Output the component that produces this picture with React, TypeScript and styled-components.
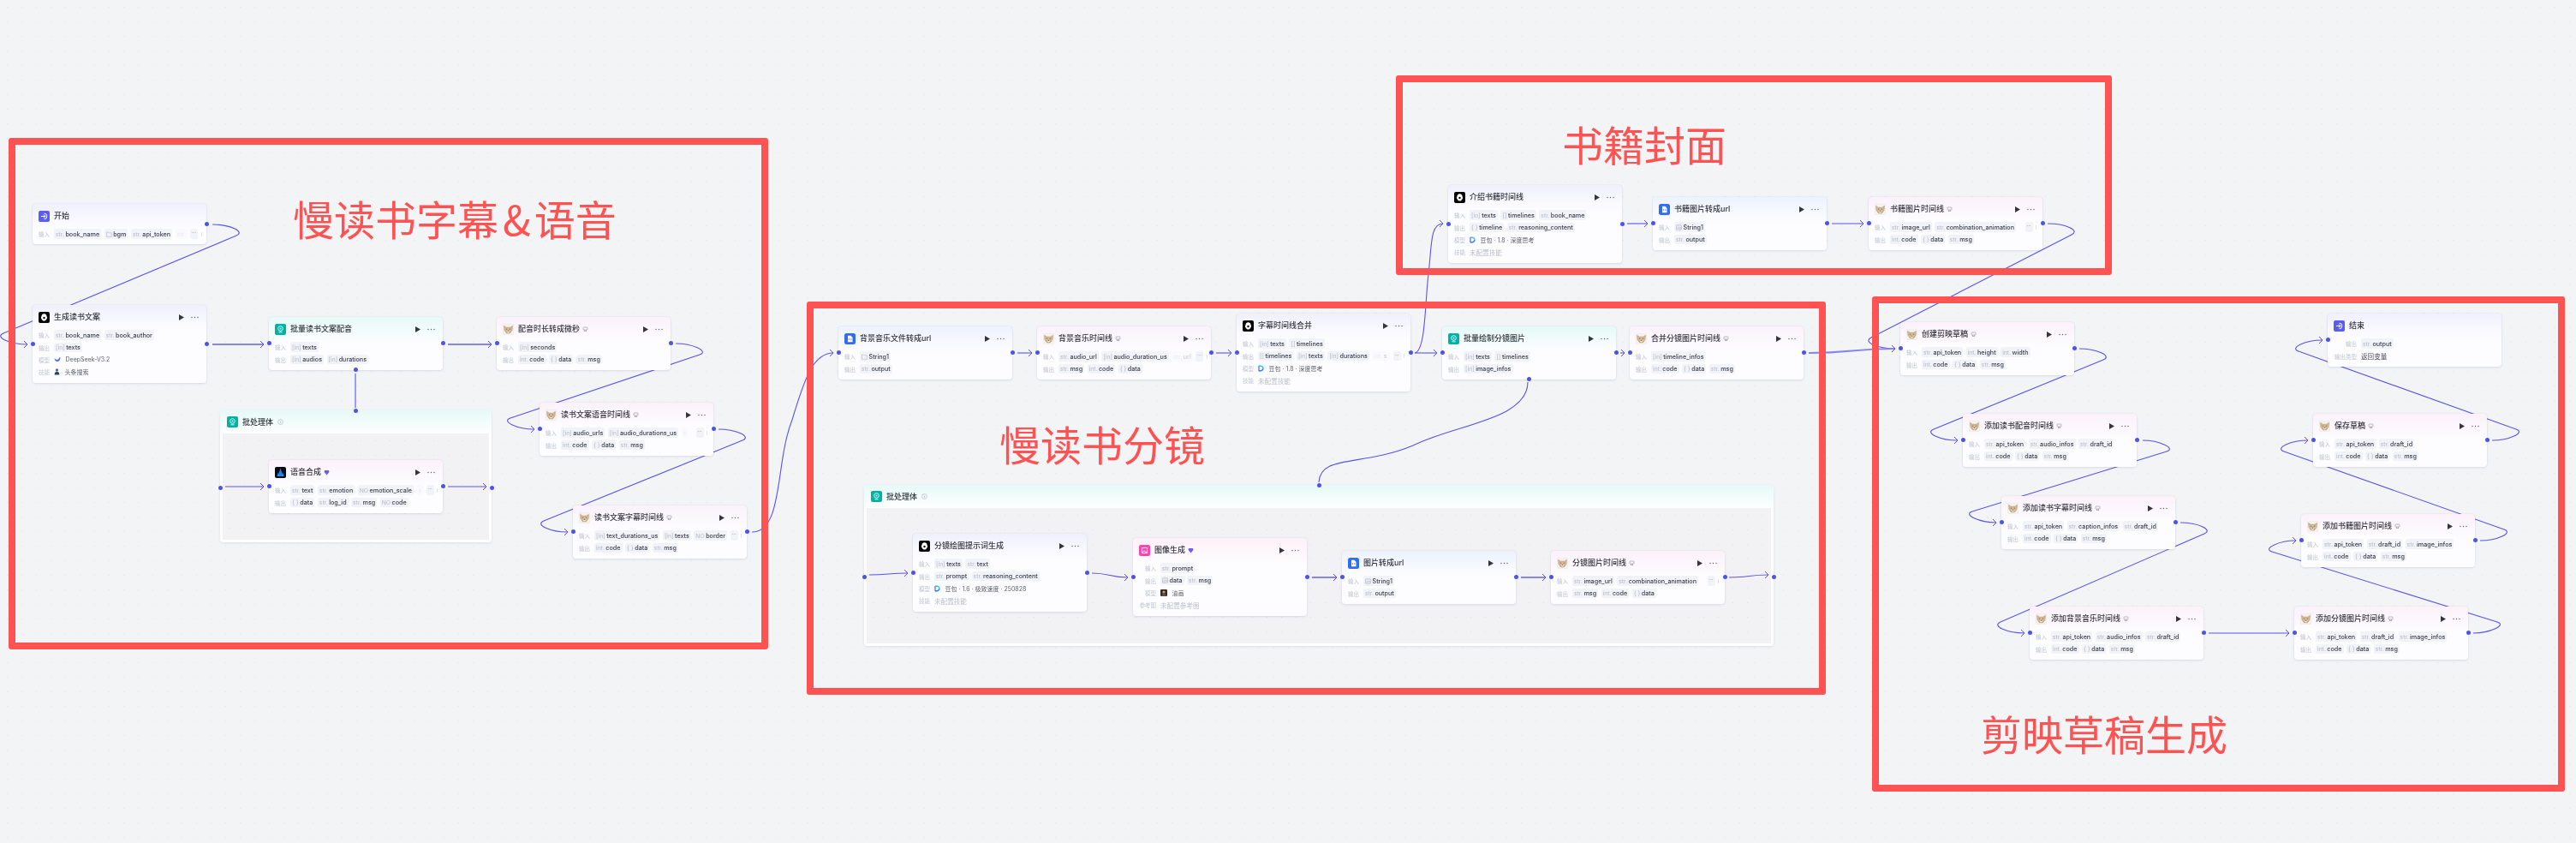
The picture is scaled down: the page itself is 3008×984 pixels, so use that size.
import styled, { createGlobalStyle } from "styled-components";

type Kind = "start" | "llm" | "batch" | "code" | "plugin" | "tts" | "image";
type Mark = "plug" | "gem" | "info";

interface RowType {
  label: string;
  tags?: string[];
  more?: string;
  model?: "doubao" | "whale" | "news" | "paint";
  text?: string;
  empty?: string;
  plain?: string;
}

interface NodeType {
  title: string;
  kind: Kind;
  x: number;
  y: number;
  rows: RowType[];
  labelWidth?: number;
  noActions?: boolean;
  noLeft?: boolean;
  noRight?: boolean;
  bottomDot?: boolean;
}

const tints: Record<Kind, string> = {
  start: "#f0f0ff",
  llm: "#f0f0fe",
  batch: "#e5faf7",
  code: "#ecf2ff",
  plugin: "#fbf1fc",
  tts: "#fbf1fc",
  image: "#fef0f7",
};

const marks: Partial<Record<Kind, Mark>> = {
  plugin: "plug",
  tts: "gem",
  image: "gem",
};

const nodes: NodeType[] = [
  {
    title: "开始",
    kind: "start",
    x: 38,
    y: 238,
    noActions: true,
    noLeft: true,
    rows: [{ label: "输入", tags: ["str. book_name", "file bgm", "str. api_token"], more: "str." }],
  },
  {
    title: "生成读书文案",
    kind: "llm",
    x: 38,
    y: 356,
    rows: [
      { label: "输入", tags: ["str. book_name", "str. book_author"] },
      { label: "输出", tags: ["[in] texts"] },
      { label: "模型", model: "whale", text: "DeepSeek-V3.2" },
      { label: "技能", model: "news", text: "头条搜索" },
    ],
  },
  {
    title: "批量读书文案配音",
    kind: "batch",
    x: 314,
    y: 370,
    bottomDot: true,
    rows: [
      { label: "输入", tags: ["[in] texts"] },
      { label: "输出", tags: ["[in] audios", "[in] durations"] },
    ],
  },
  {
    title: "配音时长转成微秒",
    kind: "plugin",
    x: 580,
    y: 370,
    rows: [
      { label: "输入", tags: ["[in] seconds"] },
      { label: "输出", tags: ["int. code", "{} data", "str. msg"] },
    ],
  },
  {
    title: "语音合成",
    kind: "tts",
    x: 314,
    y: 537,
    rows: [
      { label: "输入", tags: ["str. text", "str. emotion", "NO emotion_scale"], more: "s" },
      { label: "输出", tags: ["{} data", "str. log_id", "str. msg", "NO code"] },
    ],
  },
  {
    title: "读书文案语音时间线",
    kind: "plugin",
    x: 630,
    y: 470,
    rows: [
      { label: "输入", tags: ["[in] audio_urls", "[in] audio_durations_us"], more: "s" },
      { label: "输出", tags: ["int. code", "{} data", "str. msg"] },
    ],
  },
  {
    title: "读书文案字幕时间线",
    kind: "plugin",
    x: 669,
    y: 590,
    rows: [
      { label: "输入", tags: ["[in] text_durations_us", "[in] texts", "NO border"], more: "" },
      { label: "输出", tags: ["int. code", "{} data", "str. msg"] },
    ],
  },
  {
    title: "背景音乐文件转成url",
    kind: "code",
    x: 979,
    y: 381,
    rows: [
      { label: "输入", tags: ["file String1"] },
      { label: "输出", tags: ["str. output"] },
    ],
  },
  {
    title: "背景音乐时间线",
    kind: "plugin",
    x: 1211,
    y: 381,
    rows: [
      { label: "输入", tags: ["str. audio_url", "[in] audio_duration_us"], more: "str. url" },
      { label: "输出", tags: ["str. msg", "int. code", "{} data"] },
    ],
  },
  {
    title: "字幕时间线合并",
    kind: "llm",
    x: 1444,
    y: 366,
    rows: [
      { label: "输入", tags: ["[in] texts", "[] timelines"] },
      { label: "输出", tags: ["[] timelines", "[in] texts", "[in] durations"], more: "int. s" },
      { label: "模型", model: "doubao", text: "豆包 · 1.8 · 深度思考" },
      { label: "技能", empty: "未配置技能" },
    ],
  },
  {
    title: "批量绘制分镜图片",
    kind: "batch",
    x: 1684,
    y: 381,
    bottomDot: true,
    rows: [
      { label: "输入", tags: ["[in] texts", "[] timelines"] },
      { label: "输出", tags: ["[in] image_infos"] },
    ],
  },
  {
    title: "合并分镜图片时间线",
    kind: "plugin",
    x: 1903,
    y: 381,
    rows: [
      { label: "输入", tags: ["[in] timeline_infos"] },
      { label: "输出", tags: ["int. code", "{} data", "str. msg"] },
    ],
  },
  {
    title: "分镜绘图提示词生成",
    kind: "llm",
    x: 1066,
    y: 623,
    rows: [
      { label: "输入", tags: ["[in] texts", "str. text"] },
      { label: "输出", tags: ["str. prompt", "str. reasoning_content"] },
      { label: "模型", model: "doubao", text: "豆包 · 1.6 · 极致速度 · 250828" },
      { label: "技能", empty: "未配置技能" },
    ],
  },
  {
    title: "图像生成",
    kind: "image",
    x: 1323,
    y: 628,
    labelWidth: 20,
    rows: [
      { label: "输入", tags: ["str. prompt"] },
      { label: "输出", tags: ["img data", "str. msg"] },
      { label: "模型", model: "paint", text: "油画" },
      { label: "参考图", empty: "未配置参考图" },
    ],
  },
  {
    title: "图片转成url",
    kind: "code",
    x: 1567,
    y: 643,
    rows: [
      { label: "输入", tags: ["img String1"] },
      { label: "输出", tags: ["str. output"] },
    ],
  },
  {
    title: "分镜图片时间线",
    kind: "plugin",
    x: 1811,
    y: 643,
    rows: [
      { label: "输入", tags: ["str. image_url", "str. combination_animation"], more: "" },
      { label: "输出", tags: ["str. msg", "int. code", "{} data"] },
    ],
  },
  {
    title: "介绍书籍时间线",
    kind: "llm",
    x: 1691,
    y: 216,
    rows: [
      { label: "输入", tags: ["[in] texts", "[] timelines", "str. book_name"] },
      { label: "输出", tags: ["{} timeline", "str. reasoning_content"] },
      { label: "模型", model: "doubao", text: "豆包 · 1.8 · 深度思考" },
      { label: "技能", empty: "未配置技能" },
    ],
  },
  {
    title: "书籍图片转成url",
    kind: "code",
    x: 1930,
    y: 230,
    rows: [
      { label: "输入", tags: ["img String1"] },
      { label: "输出", tags: ["str. output"] },
    ],
  },
  {
    title: "书籍图片时间线",
    kind: "plugin",
    x: 2182,
    y: 230,
    rows: [
      { label: "输入", tags: ["str. image_url", "str. combination_animation"], more: "" },
      { label: "输出", tags: ["int. code", "{} data", "str. msg"] },
    ],
  },
  {
    title: "创建剪映草稿",
    kind: "plugin",
    x: 2219,
    y: 376,
    rows: [
      { label: "输入", tags: ["str. api_token", "int. height", "int. width"] },
      { label: "输出", tags: ["int. code", "{} data", "str. msg"] },
    ],
  },
  {
    title: "添加读书配音时间线",
    kind: "plugin",
    x: 2292,
    y: 483,
    rows: [
      { label: "输入", tags: ["str. api_token", "str. audio_infos", "str. draft_id"] },
      { label: "输出", tags: ["int. code", "{} data", "str. msg"] },
    ],
  },
  {
    title: "添加读书字幕时间线",
    kind: "plugin",
    x: 2337,
    y: 579,
    rows: [
      { label: "输入", tags: ["str. api_token", "str. caption_infos", "str. draft_id"] },
      { label: "输出", tags: ["int. code", "{} data", "str. msg"] },
    ],
  },
  {
    title: "添加背景音乐时间线",
    kind: "plugin",
    x: 2370,
    y: 708,
    rows: [
      { label: "输入", tags: ["str. api_token", "str. audio_infos", "str. draft_id"] },
      { label: "输出", tags: ["int. code", "{} data", "str. msg"] },
    ],
  },
  {
    title: "添加分镜图片时间线",
    kind: "plugin",
    x: 2679,
    y: 708,
    rows: [
      { label: "输入", tags: ["str. api_token", "str. draft_id", "str. image_infos"] },
      { label: "输出", tags: ["int. code", "{} data", "str. msg"] },
    ],
  },
  {
    title: "添加书籍图片时间线",
    kind: "plugin",
    x: 2687,
    y: 600,
    rows: [
      { label: "输入", tags: ["str. api_token", "str. draft_id", "str. image_infos"] },
      { label: "输出", tags: ["int. code", "{} data", "str. msg"] },
    ],
  },
  {
    title: "保存草稿",
    kind: "plugin",
    x: 2701,
    y: 483,
    rows: [
      { label: "输入", tags: ["str. api_token", "str. draft_id"] },
      { label: "输出", tags: ["int. code", "{} data", "str. msg"] },
    ],
  },
  {
    title: "结束",
    kind: "start",
    x: 2718,
    y: 366,
    noActions: true,
    noRight: true,
    labelWidth: 27,
    rows: [
      { label: "输出", tags: ["str. output"] },
      { label: "输出类型", plain: "返回变量" },
    ],
  },
];

const batches = [
  { x: 257, y: 479, w: 317, h: 154 },
  { x: 1009, y: 566, w: 1062, h: 188 },
];

const frames = [
  { before: "慢读书字幕", after: "语音", x: 10, y: 161, w: 887, h: 597, px: 324, py: 60 },
  { before: "慢读书分镜", x: 942, y: 352, w: 1190, h: 459, px: 217, py: 132 },
  { before: "书籍封面", x: 1630, y: 88, w: 836, h: 233, px: 186, py: 46 },
  { before: "剪映草稿生成", x: 2186, y: 346, w: 809, h: 578, px: 119, py: 476 },
];

// straight-ish hop between two handles
const hop = (sx: number, sy: number, tx: number, ty: number) => {
  const x0 = sx + 6;
  const x1 = tx - 6;
  const mid = (x0 + x1) / 2;
  return `M${x0} ${sy} C${mid} ${sy} ${mid} ${ty} ${x1} ${ty}`;
};

// backwards edge: bulges right of the source, runs diagonally, bulges left of the target
const loop = (sx: number, sy: number, tx: number, ty: number, bulge = 32) => {
  const x0 = sx + 6;
  const x1 = tx - 6;
  const dir = ty > sy ? 1 : -1;
  const ax = x0 + bulge - 4;
  const ay = sy + dir * 13;
  const bx = x1 - bulge + 4;
  const by = ty - dir * 13;
  const len = Math.hypot(bx - ax, by - ay);
  const ux = ((bx - ax) / len) * 12;
  const uy = ((by - ay) / len) * 12;
  return [
    `M${x0} ${sy}`,
    `C${x0 + 20} ${sy} ${ax - ux} ${ay - uy} ${ax} ${ay}`,
    `L${bx} ${by}`,
    `C${bx + ux} ${by + uy} ${x1 - 20} ${ty} ${x1} ${ty}`,
  ].join(" ");
};

const thinEdges = [
  loop(242, 262, 38, 402),
  loop(783, 401, 630, 501),
  loop(833, 501, 669, 621),
  "M878 621 C915 621 905 540 925 490 C940 440 950 412 973 412",
  hop(257, 568, 314, 568),
  hop(517, 568, 574, 568),
  hop(1182, 412, 1211, 412),
  hop(1414, 412, 1444, 412),
  hop(1646, 412, 1684, 412),
  hop(1886, 412, 1903, 412),
  "M1652 412 C1665 410 1664 350 1668 320 C1672 285 1670 261 1685 261",
  hop(1894, 261, 1930, 261),
  hop(2133, 261, 2182, 261),
  loop(2385, 261, 2219, 407),
  hop(1009, 671, 1066, 669),
  hop(1269, 669, 1323, 674),
  hop(2013, 674, 2071, 671),
  loop(2422, 407, 2292, 514),
  loop(2496, 514, 2337, 610),
  loop(2540, 610, 2370, 739),
  hop(2573, 739, 2679, 739),
  loop(2882, 739, 2687, 631),
  loop(2890, 631, 2701, 514),
  loop(2904, 514, 2718, 397),
];

const thickEdges = [
  hop(242, 402, 314, 402),
  hop(517, 402, 580, 402),
  hop(1526, 674, 1567, 674),
  hop(1770, 674, 1811, 674),
  hop(2106, 412, 2219, 407),
];

// batch links end on the container's top handle, without an arrow
const batchEdges = [
  "M415 436 L415 476",
  "M1784 446 C1784 490 1700 495 1650 520 C1590 545 1542 530 1540 563",
];

const GlobalStyle = createGlobalStyle`
  html,
  body {
    margin: 0;
    padding: 0;
    background: #f3f4f6;
  }

  body {
    width: 3008px;
    height: 984px;
    overflow: hidden;
    font-family: Inter, "Noto Sans CJK SC", sans-serif;
  }
`;

const Canvas = styled.div`
  position: relative;
  width: 3008px;
  height: 984px;
  overflow: hidden;
  background-color: #f3f4f6;
  background-image: radial-gradient(#e2e4e9 0.7px, transparent 0.8px);
  background-size: 17px 17px;
  filter: blur(0.45px);
`;

const EdgeLayer = styled.svg`
  position: absolute;
  left: 0;
  top: 0;
`;

const Batch = styled.div<{ $x: number; $y: number; $w: number; $h: number }>`
  position: absolute;
  left: ${(p) => p.$x}px;
  top: ${(p) => p.$y}px;
  width: ${(p) => p.$w}px;
  height: ${(p) => p.$h}px;
  box-sizing: border-box;
  display: flex;
  flex-direction: column;
  padding: 0 3px 3px;
  border-radius: 4px;
  background: linear-gradient(180deg, ${tints.batch} 0, #ffffff 28px);
  box-shadow: 0 1px 3px rgba(40, 40, 90, 0.1);
`;

const BatchHead = styled.div`
  display: flex;
  align-items: center;
  gap: 5px;
  height: 27px;
  flex: none;
  padding-left: 5px;
  font-size: 9px;
  font-weight: 500;
  color: #34353f;
`;

const BatchBody = styled.div`
  flex: 1;
  background-color: #f2f2f4;
  background-image: radial-gradient(#dfe0e5 0.7px, transparent 0.8px);
  background-size: 17px 17px;
`;

const Card = styled.div<{ $x: number; $y: number; $tint: string }>`
  position: absolute;
  left: ${(p) => p.$x}px;
  top: ${(p) => p.$y}px;
  width: 203px;
  box-sizing: border-box;
  padding-bottom: 5px;
  border-radius: 4px;
  background: linear-gradient(180deg, ${(p) => p.$tint} 0, #fdfdff 30px);
  box-shadow: 0 0 1px rgba(40, 40, 90, 0.18), 0 1px 3px rgba(40, 40, 90, 0.1);
`;

const Head = styled.div`
  display: flex;
  align-items: center;
  height: 28px;
  padding: 0 9px 0 7px;
  box-sizing: border-box;
`;

const Title = styled.span`
  margin-left: 5px;
  font-size: 9px;
  font-weight: 500;
  line-height: 12px;
  color: #34353f;
  white-space: nowrap;
`;

const MarkSlot = styled.span`
  display: flex;
  margin-left: 3px;
`;

const Actions = styled.div`
  display: flex;
  align-items: center;
  gap: 8px;
  margin-left: auto;
`;

const Row = styled.div`
  display: flex;
  align-items: center;
  gap: 5px;
  height: 14.4px;
  padding: 0 7px;
`;

const RowLabel = styled.span<{ $w: number }>`
  flex: none;
  width: ${(p) => p.$w}px;
  text-align: right;
  font-size: 6.5px;
  color: #c3c6d1;
  white-space: nowrap;
`;

const Tags = styled.div`
  display: flex;
  align-items: center;
  gap: 3.5px;
  flex: 1;
  min-width: 0;
`;

const Tag = styled.span<{ $faded?: boolean }>`
  display: inline-flex;
  align-items: center;
  gap: 1.5px;
  flex: none;
  height: 11.5px;
  padding: 0 2px;
  border-radius: 2.5px;
  background: #f2f3f8;
  font-size: 7.2px;
  font-weight: 500;
  color: #41434f;
  white-space: nowrap;
  opacity: ${(p) => (p.$faded ? 0.25 : 1)};
`;

const Prefix = styled.span`
  font-size: 6.8px;
  font-weight: 400;
  color: #b5b8c6;
`;

const Chip = styled.span`
  flex: none;
  margin-left: auto;
  width: 9px;
  height: 11.5px;
  border-radius: 2.5px;
  background: #f2f3f8;
  font-size: 6px;
  line-height: 9px;
  text-align: center;
  color: #8d8f9c;
`;

const Sliver = styled.span`
  flex: none;
  width: 1px;
  height: 5px;
  background: #e3e4ea;
`;

const ModelText = styled.span`
  margin-left: 2px;
  font-size: 7px;
  color: #5d5f6c;
  white-space: nowrap;
`;

const Empty = styled.span`
  font-size: 7.6px;
  color: #bcbec9;
  white-space: nowrap;
`;

const Plain = styled.span`
  font-size: 7.6px;
  color: #484a56;
  white-space: nowrap;
`;

const Dot = styled.i<{ $side: "left" | "right" | "top" | "bottom" }>`
  position: absolute;
  width: 5px;
  height: 5px;
  border-radius: 50%;
  background: #4d53e8;
  ${(p) => (p.$side === "left" ? "left: -2.5px; top: calc(50% - 2.5px);" : "")}
  ${(p) => (p.$side === "right" ? "right: -2.5px; top: calc(50% - 2.5px);" : "")}
  ${(p) => (p.$side === "top" ? "top: -2.5px; left: calc(50% - 2.5px);" : "")}
  ${(p) => (p.$side === "bottom" ? "bottom: -2.5px; left: calc(50% - 2.5px);" : "")}
`;

const BatchDot = styled(Dot)<{ $y: number }>`
  top: ${(p) => p.$y}px;
`;

const Frame = styled.div<{ $x: number; $y: number; $w: number; $h: number; $px: number; $py: number }>`
  position: absolute;
  left: ${(p) => p.$x}px;
  top: ${(p) => p.$y}px;
  width: ${(p) => p.$w}px;
  height: ${(p) => p.$h}px;
  box-sizing: border-box;
  padding: ${(p) => p.$py}px 0 0 ${(p) => p.$px}px;
  border: 8px solid #ff5252;
  border-radius: 3px;
  pointer-events: none;
`;

const FrameLabel = styled.div`
  font-family: "Noto Sans CJK SC", sans-serif;
  font-size: 48px;
  line-height: 50px;
  color: #ff5252;
  white-space: nowrap;
`;

const Amp = styled.span`
  margin: 0 4px 0 5px;
`;

const KindIcon = ({ kind }: { kind: Kind }) => {
  if (kind === "start") {
    return (
      <svg width="13" height="13" viewBox="0 0 13 13">
        <rect width="13" height="13" rx="2" fill="#5a5cf6" />
        <path d="M3 6.5h5M6 4.5l2 2-2 2" fill="none" stroke="#fff" />
        <path d="M6.5 3.2a3.3 3.3 0 1 1 0 6.6" fill="none" stroke="#fff" />
      </svg>
    );
  }
  if (kind === "llm") {
    return (
      <svg width="13" height="13" viewBox="0 0 13 13">
        <rect width="13" height="13" rx="2" fill="#050505" />
        <path d="M6.5 2.2c2 0 3 1.4 3 3 .8.8.8 2.2 0 3-.7 1.4-1.8 2.4-3 2.4s-2.3-1-3-2.4c-.8-.8-.8-2.2 0-3 0-1.6 1-3 3-3z" fill="#fff" />
        <circle cx="6.5" cy="7" r="1.2" fill="#050505" />
      </svg>
    );
  }
  if (kind === "batch") {
    return (
      <svg width="13" height="13" viewBox="0 0 13 13">
        <rect width="13" height="13" rx="2" fill="#00b2a6" />
        <circle cx="6.5" cy="5.5" r="2.8" fill="none" stroke="#d7f6f2" />
        <circle cx="6.5" cy="5.5" r="1" fill="#d7f6f2" />
        <path d="M4.5 9.8h4" stroke="#d7f6f2" />
      </svg>
    );
  }
  if (kind === "code") {
    return (
      <svg width="13" height="13" viewBox="0 0 13 13">
        <rect width="13" height="13" rx="2.5" fill="#2f6df6" />
        <path d="M4 2.8h3.5L9.5 5v5.2H4z" fill="#fff" />
        <path d="M5.8 6 4.900 7l.9 1M7.400 6l.9 1-.9 1" fill="none" stroke="#2f6df6" strokeWidth=".7" />
      </svg>
    );
  }
  if (kind === "tts") {
    return (
      <svg width="13" height="13" viewBox="0 0 13 13">
        <rect width="13" height="13" rx="2" fill="#060a14" />
        <path d="M6.5 1.5 9.500 11h-6z" fill="#2c7df0" />
        <path d="M2.500 11 4 6l1 5zM10.500 11 9 6l-1 5z" fill="#1a9fe8" />
      </svg>
    );
  }
  if (kind === "image") {
    return (
      <svg width="13" height="13" viewBox="0 0 13 13">
        <rect width="13" height="13" rx="2" fill="#ff45b3" />
        <path d="M3.500 3.500h6v6h-6z" fill="none" stroke="#fff" strokeWidth="1.100" />
        <path d="M3.800 8.800 6 6.800l3.200 2.500" fill="none" stroke="#fff" strokeWidth=".9" />
      </svg>
    );
  }
  // shiba head used by the draft plugin
  return (
    <svg width="13" height="13" viewBox="0 0 13 13">
      <rect x=".25" y=".25" width="12.5" height="12.5" rx="2" fill="#f7f3ec" stroke="#e6e2dc" strokeWidth=".5" />
      <path d="M1.6 2.4 4.200 4.200h4.600l2.600-1.800-.4 5-2.400 3.400H4.400L2 7.400z" fill="#d9bd98" stroke="#8a6f52" strokeWidth=".4" />
      <path d="M3.800 6.200h1.500M7.700 6.200h1.500" fill="none" stroke="#5d4630" strokeWidth=".7" />
      <path d="M4.500 9.500 6.500 7.300l2 2.200-2 1.300z" fill="#f6eee2" stroke="#8a6f52" strokeWidth=".3" />
      <circle cx="6.500" cy="8.300" r=".5" fill="#4a3624" />
    </svg>
  );
};

const TitleMark = ({ mark }: { mark: Mark }) => {
  if (mark === "gem") {
    return (
      <svg width="7" height="7" viewBox="0 0 7 7">
        <path d="M1 1h5l.4 2L3.500 6.500.6 3z" fill="#6a5cf5" />
      </svg>
    );
  }
  if (mark === "info") {
    return (
      <svg width="7" height="7" viewBox="0 0 7 7">
        <circle cx="3.500" cy="3.500" r="2.900" fill="none" stroke="#a9abb8" strokeWidth=".6" />
        <path d="M3.500 3v2M3.500 1.800v.6" stroke="#a9abb8" strokeWidth=".6" />
      </svg>
    );
  }
  return (
    <svg width="7" height="7" viewBox="0 0 7 7">
      <rect x="1" y="1" width="5" height="3" rx=".6" fill="none" stroke="#8d8f9c" strokeWidth=".6" />
      <path d="M2 5.500h3M2.500 4v1.500M4.500 4v1.500" fill="none" stroke="#8d8f9c" strokeWidth=".6" />
    </svg>
  );
};

const ModelIcon = ({ model }: { model: RowType["model"] }) => {
  if (model === "doubao") {
    return (
      <svg width="7" height="8" viewBox="0 0 7 8">
        <path d="M1 1v6" stroke="#7b5cf5" strokeWidth="1.300" />
        <path d="M1 1c3.500 0 5 1.500 5 3" fill="none" stroke="#26c6e8" strokeWidth="1.300" />
        <path d="M6 4c0 1.500-1.500 3-5 3" fill="none" stroke="#2f7df0" strokeWidth="1.300" />
      </svg>
    );
  }
  if (model === "whale") {
    return (
      <svg width="8" height="7" viewBox="0 0 8 7">
        <path d="M.5 2c1.500 2 3.500 2.500 4.500 1.500S6 1 7.500 1C7.500 4 6 6 3.500 6 2 6 1 4.500.5 2z" fill="#4d6bfe" />
      </svg>
    );
  }
  if (model === "news") {
    return (
      <svg width="7" height="8" viewBox="0 0 7 8">
        <circle cx="3.500" cy="2" r="1.700" fill="#3d6f9e" />
        <path d="M.7 7.500c0-3 1.200-3.500 2.800-3.500s2.800.5 2.800 3.500z" fill="#1f4668" />
      </svg>
    );
  }
  return (
    <svg width="8" height="8" viewBox="0 0 8 8">
      <rect width="8" height="8" rx="1" fill="#3a2b22" />
      <circle cx="4" cy="3" r="1.600" fill="#c79a74" />
      <path d="M1.500 8c0-2.500 1-3.500 2.500-3.500S6.500 5.500 6.500 8z" fill="#6d4a34" />
    </svg>
  );
};

const TagPrefix = ({ type }: { type: string }) => {
  if (type === "file") {
    return (
      <svg width="7" height="7" viewBox="0 0 7 7">
        <path d="M.5 1h2.200l.7.8h3v4.500H.5z" fill="none" stroke="#a7aaba" strokeWidth=".5" />
      </svg>
    );
  }
  if (type === "img") {
    return (
      <svg width="7" height="7" viewBox="0 0 7 7">
        <rect x=".5" y=".7" width="6" height="5.600" rx=".7" fill="#e5e7f0" stroke="#a7aaba" strokeWidth=".5" />
        <path d="M1 5.500 3 3.500l1.200 1L5.200 3.300 6.200 5" fill="none" stroke="#a7aaba" strokeWidth=".5" />
      </svg>
    );
  }
  return <Prefix>{type === "{}" ? "{ }" : type}</Prefix>;
};

const NodeTag = ({ value, faded }: { value: string; faded?: boolean }) => {
  const [type, name] = value.split(" ");
  return (
    <Tag $faded={faded}>
      <TagPrefix type={type} />
      {name}
    </Tag>
  );
};

const WorkflowNode = ({ node }: { node: NodeType }) => {
  const labelWidth = node.labelWidth ?? 13;
  const mark = marks[node.kind];
  return (
    <Card $x={node.x} $y={node.y} $tint={tints[node.kind]}>
      <Head>
        <KindIcon kind={node.kind} />
        <Title>{node.title}</Title>
        {mark && (
          <MarkSlot>
            <TitleMark mark={mark} />
          </MarkSlot>
        )}
        {!node.noActions && (
          <Actions>
            <svg width="6" height="7" viewBox="0 0 6 7">
              <path d="M0 0l6 3.500L0 7z" fill="#34353f" />
            </svg>
            <svg width="9" height="3" viewBox="0 0 9 3">
              <circle cx="1" cy="1.500" r=".7" fill="#5a5c69" />
              <circle cx="4.500" cy="1.500" r=".7" fill="#5a5c69" />
              <circle cx="8" cy="1.500" r=".7" fill="#5a5c69" />
            </svg>
          </Actions>
        )}
      </Head>
      {node.rows.map((row) => (
        <Row key={row.label}>
          <RowLabel $w={labelWidth}>{row.label}</RowLabel>
          {row.tags && (
            <Tags>
              {row.tags.map((tag) => (
                <NodeTag key={tag} value={tag} />
              ))}
              {row.more !== undefined && (
                <>
                  {row.more && <NodeTag value={row.more} faded />}
                  <Chip>···</Chip>
                  <Sliver />
                </>
              )}
            </Tags>
          )}
          {row.model && (
            <Tags>
              <ModelIcon model={row.model} />
              <ModelText>{row.text}</ModelText>
            </Tags>
          )}
          {row.empty && <Empty>{row.empty}</Empty>}
          {row.plain && <Plain>{row.plain}</Plain>}
        </Row>
      ))}
      {!node.noLeft && <Dot $side="left" />}
      {!node.noRight && <Dot $side="right" />}
      {node.bottomDot && <Dot $side="bottom" />}
    </Card>
  );
};

const App = () => {
  return (
    <>
      <GlobalStyle />
      <Canvas>
        {batches.map((b) => (
          <Batch key={b.x} $x={b.x} $y={b.y} $w={b.w} $h={b.h}>
            <BatchHead>
              <KindIcon kind="batch" />
              批处理体
              <TitleMark mark="info" />
            </BatchHead>
            <BatchBody />
            <Dot $side="top" />
            <BatchDot $side="left" $y={(b.h + 27) / 2 - 2.5} />
            <BatchDot $side="right" $y={(b.h + 27) / 2 - 2.5} />
          </Batch>
        ))}
        <EdgeLayer width="3008" height="984" viewBox="0 0 3008 984" fill="none">
          <defs>
            <marker id="arrow" viewBox="0 0 6 10" refX="5" refY="5" markerWidth="6" markerHeight="10" orient="auto" markerUnits="userSpaceOnUse">
              <path d="M1 1l4 4-4 4" fill="none" stroke="#5b52ee" />
            </marker>
          </defs>
          {thinEdges.map((d) => (
            <path key={d} d={d} stroke="#5a52ee" strokeWidth="1.1" markerEnd="url(#arrow)" />
          ))}
          {thickEdges.map((d) => (
            <path key={d} d={d} stroke="#8683f2" strokeWidth="2" markerEnd="url(#arrow)" />
          ))}
          {batchEdges.map((d) => (
            <path key={d} d={d} stroke="#5a52ee" strokeWidth="1.1" />
          ))}
        </EdgeLayer>
        {nodes.map((node) => (
          <WorkflowNode key={node.title} node={node} />
        ))}
        {frames.map((f) => (
          <Frame key={f.before} $x={f.x} $y={f.y} $w={f.w} $h={f.h} $px={f.px} $py={f.py}>
            <FrameLabel>
              {f.before}
              {f.after && (
                <>
                  <Amp>&amp;</Amp>
                  {f.after}
                </>
              )}
            </FrameLabel>
          </Frame>
        ))}
      </Canvas>
    </>
  );
};

export default App;
